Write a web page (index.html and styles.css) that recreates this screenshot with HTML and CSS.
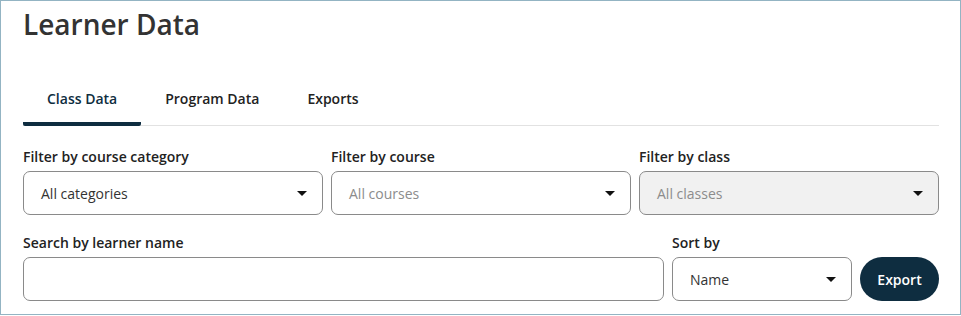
FILE: index.html
```html
<!DOCTYPE html>
<html lang="en">
<head>
    <meta charset="UTF-8">
    <meta name="viewport" content="width=device-width, initial-scale=1.0">
    <title>Learner Data</title>
    <link rel="stylesheet" href="styles.css">
</head>
<body>
    <div class="frame">
        <h1 class="title">Learner Data</h1>

        <div class="tabs">
            <div class="tab active">Class Data</div>
            <div class="tab">Program Data</div>
            <div class="tab">Exports</div>
        </div>

        <div class="filters">
            <div class="field">
                <label class="label">Filter by course category</label>
                <div class="select">
                    <span>All categories</span>
                    <svg class="caret" width="10" height="5" viewBox="0 0 10 5"><path d="M0 0h10L5 5z"/></svg>
                </div>
            </div>
            <div class="field">
                <label class="label">Filter by course</label>
                <div class="select">
                    <span class="placeholder">All courses</span>
                    <svg class="caret" width="10" height="5" viewBox="0 0 10 5"><path d="M0 0h10L5 5z"/></svg>
                </div>
            </div>
            <div class="field">
                <label class="label">Filter by class</label>
                <div class="select disabled">
                    <span class="placeholder">All classes</span>
                    <svg class="caret" width="10" height="5" viewBox="0 0 10 5"><path d="M0 0h10L5 5z"/></svg>
                </div>
            </div>
        </div>

        <div class="search-row">
            <div class="field grow">
                <label class="label">Search by learner name</label>
                <input type="text" class="search-input">
            </div>
            <div class="field sort">
                <label class="label">Sort by</label>
                <div class="select">
                    <span>Name</span>
                    <svg class="caret" width="10" height="5" viewBox="0 0 10 5"><path d="M0 0h10L5 5z"/></svg>
                </div>
            </div>
            <button class="export-btn">Export</button>
        </div>
    </div>
</body>
</html>
```

FILE: styles.css
```css
* {
    box-sizing: border-box;
}
body {
    margin: 0;
    font-family: "Open Sans", "Noto Sans", sans-serif;
    color: #222;
    background: #fff;
}
.frame {
    width: 961px;
    height: 315px;
    border: 1px solid #93b4c3;
    padding: 0 21px 0 22px;
    overflow: hidden;
}
.title {
    margin: 0;
    padding-top: 6px;
    font-size: 28px;
    line-height: 34px;
    font-weight: 600;
    color: #333;
}
.tabs {
    display: flex;
    margin-top: 35px;
    border-bottom: 1px solid #e2e2e2;
}
.tab {
    padding: 13px 24px 13px;
    font-size: 14px;
    line-height: 20px;
    font-weight: 600;
    color: #222;
    border-bottom: 4px solid transparent;
    margin-bottom: -1px;
}
.tab.active {
    color: #0e2d40;
    border-bottom-color: #0e2d40;
    border-radius: 2px;
}
.filters {
    display: flex;
    gap: 8px;
    margin-top: 21px;
}
.filters .field {
    width: 300px;
}
.field {
    display: flex;
    flex-direction: column;
}
.label {
    font-size: 14px;
    line-height: 20px;
    font-weight: 600;
    color: #222;
    margin-bottom: 4px;
}
.select {
    height: 44px;
    border: 1px solid #8a8a8a;
    border-radius: 7px;
    display: flex;
    align-items: center;
    justify-content: space-between;
    padding: 0 15px 0 17px;
    font-size: 14px;
    color: #333;
    background: #fff;
}
.select.disabled {
    background: #f1f1f1;
}
.placeholder {
    color: #8c8c8c;
}
.caret {
    fill: #111;
}
.search-row {
    display: flex;
    align-items: flex-end;
    gap: 8px;
    margin-top: 18px;
}
.grow {
    flex: 1;
}
.search-input {
    height: 44px;
    border: 1px solid #8a8a8a;
    border-radius: 7px;
    font-family: inherit;
    font-size: 14px;
    padding: 0 17px;
}
.sort {
    width: 180px;
}
.export-btn {
    height: 44px;
    width: 79px;
    border: none;
    border-radius: 22px;
    background: #0e2d40;
    color: #fff;
    font-family: inherit;
    font-size: 14px;
    font-weight: 600;
    padding: 0;
}
```
